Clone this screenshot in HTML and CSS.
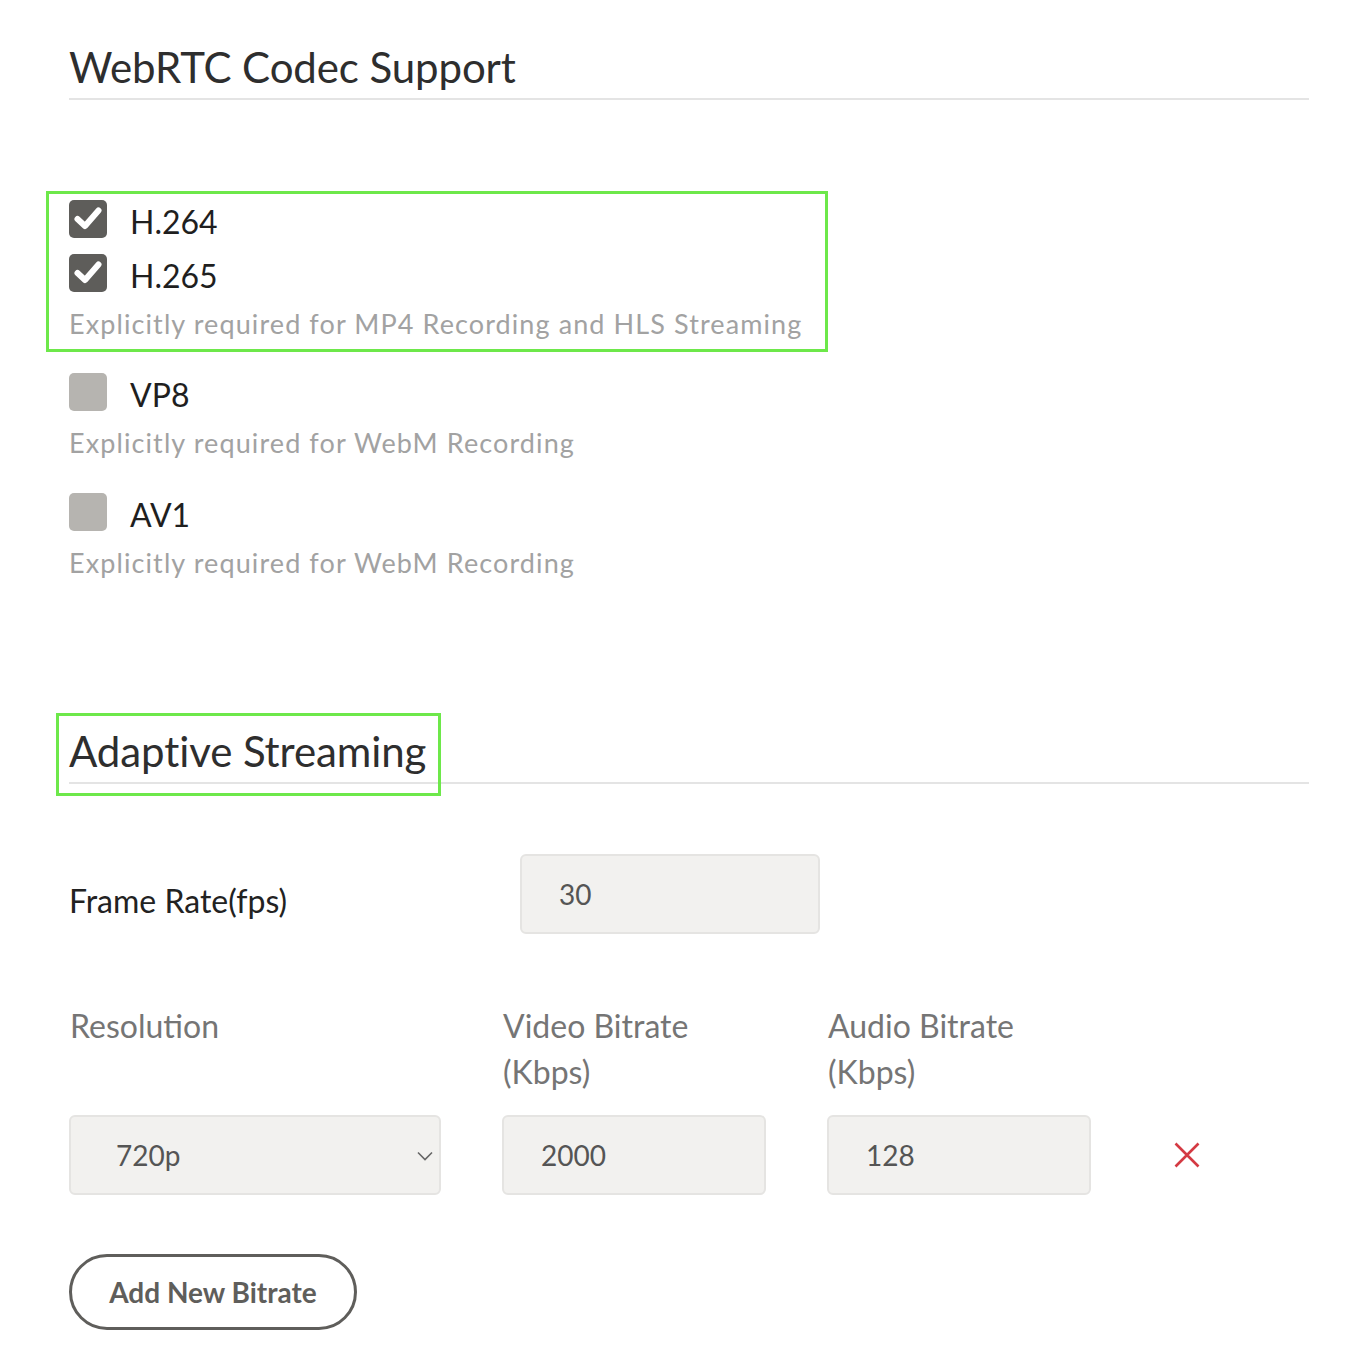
FILE: index.html
```html
<!DOCTYPE html>
<html lang="en">
<head>
<meta charset="utf-8">
<title>Codec settings</title>
<link rel="stylesheet" href="styles.css">
</head>
<body>
<main class="page">
  <section class="section">
    <h2 class="section-title"><span class="title-text">WebRTC Codec Support</span></h2>
    <div class="codecs">
      <div class="highlight">
        <div class="codec-row">
          <span class="check checked"><svg viewBox="0 0 38 38" width="38" height="38"><path d="M8.5 19 L16 26 L29.5 10.5" fill="none" stroke="#fff" stroke-width="6" stroke-linecap="round" stroke-linejoin="round"/></svg></span>
          <span class="codec-name">H.264</span>
        </div>
        <div class="codec-row">
          <span class="check checked"><svg viewBox="0 0 38 38" width="38" height="38"><path d="M8.5 19 L16 26 L29.5 10.5" fill="none" stroke="#fff" stroke-width="6" stroke-linecap="round" stroke-linejoin="round"/></svg></span>
          <span class="codec-name">H.265</span>
        </div>
        <p class="hint">Explicitly required for MP4 Recording and HLS Streaming</p>
      </div>
      <div class="codec-item">
        <div class="codec-row">
          <span class="check"></span>
          <span class="codec-name">VP8</span>
        </div>
        <p class="hint">Explicitly required for WebM Recording</p>
      </div>
      <div class="codec-item">
        <div class="codec-row">
          <span class="check"></span>
          <span class="codec-name">AV1</span>
        </div>
        <p class="hint">Explicitly required for WebM Recording</p>
      </div>
    </div>
  </section>

  <section class="section adaptive">
    <h2 class="section-title"><span class="title-text boxed">Adaptive Streaming</span></h2>
    <div class="frame-row">
      <label class="field-label">Frame Rate(fps)</label>
      <div class="input">30</div>
    </div>
    <div class="bitrate-grid">
      <div class="col-label">Resolution</div>
      <div class="col-label">Video Bitrate<br>(Kbps)</div>
      <div class="col-label">Audio Bitrate<br>(Kbps)</div>
      <div></div>
      <div class="input select">720p
        <svg class="chevron" viewBox="0 0 16 10" width="16" height="10"><path d="M1 1.5 L8 8.5 L15 1.5" fill="none" stroke="#666" stroke-width="1.6"/></svg>
      </div>
      <div class="input">2000</div>
      <div class="input">128</div>
      <div class="remove"><svg viewBox="0 0 26 26" width="26" height="26"><path d="M1.5 1.5 L24.5 24.5 M24.5 1.5 L1.5 24.5" stroke="#d43a43" stroke-width="2.6"/></svg></div>
    </div>
    <button class="add-btn" type="button">Add New Bitrate</button>
  </section>
</main>
</body>
</html>
```
FILE: styles.css
```css
* { box-sizing: border-box; }
html, body { margin: 0; padding: 0; background: #fff; }
body { font-family: Lato, "Liberation Sans", sans-serif; color: #2a2a2a; }

.page { padding: 42px 47px 0 69px; }

.section-title {
  margin: 0;
  font-size: 42px;
  font-weight: 400;
  line-height: 50px;
  color: #2e2e2e;
  border-bottom: 2px solid #e4e4e4;
  padding-bottom: 6px;
  letter-spacing: -0.1px;
}
.title-text { display: inline-block; }
.boxed { position: relative; }
.boxed::after {
  content: "";
  position: absolute;
  top: -13px; bottom: -20px; left: -13px; right: -15px;
  border: 3px solid #6de84a;
}

.codecs { margin-top: 91px; }

.highlight {
  width: 782px;
  margin-left: -23px;
  border: 3px solid #6de84a;
  padding: 6px 0 8px 20px;
}

.codec-row { display: flex; align-items: center; gap: 23px; height: 38px; }
.codec-row + .codec-row { margin-top: 16px; }

.check {
  width: 38px; height: 38px;
  border-radius: 5px;
  background: #b6b4b0;
  flex: none;
  display: block;
}
.check.checked { background: #5e5d5a; }
.check svg { display: block; }

.codec-name { font-size: 32px; color: #1f1f1f; line-height: 38px; margin-top: 6px; }

.hint {
  margin: 15px 0 0;
  font-size: 27px;
  line-height: 34px;
  color: #a2a2a2;
  letter-spacing: 1.1px;
}

.codec-item { margin-top: 21px; }
.codec-item + .codec-item { margin-top: 33px; }

.adaptive { margin-top: 146px; }

.frame-row {
  display: grid;
  grid-template-columns: 451px 300px;
  align-items: center;
  margin-top: 70px;
}
.field-label { font-size: 32px; color: #222; margin-top: 12px; }

.input {
  height: 80px;
  background: #f2f1ef;
  border: 2px solid #e5e4e2;
  border-radius: 6px;
  padding-left: 37px;
  display: flex;
  align-items: center;
  font-size: 28px;
  color: #555;
}

.bitrate-grid {
  display: grid;
  grid-template-columns: 372px 264px 264px auto;
  column-gap: 61px;
  row-gap: 20px;
  margin-top: 69px;
  align-items: center;
}
.col-label {
  align-self: start;
  font-size: 32px;
  line-height: 46px;
  color: #757575;
  margin-left: 1px;
  height: 92px;
}
.select { position: relative; padding-left: 45px; }
.chevron { position: absolute; right: 6px; top: 34px; }
.remove { padding-left: 22px; display: flex; align-items: center; }
.remove svg { display: block; }

.add-btn {
  margin-top: 59px;
  width: 288px;
  height: 76px;
  border: 3px solid #5f5e5b;
  border-radius: 40px;
  background: #fff;
  font-family: Lato, "Liberation Sans", sans-serif;
  font-weight: 700;
  font-size: 28px;
  color: #5f5e5b;
  padding: 0;
  display: block;
}
```
